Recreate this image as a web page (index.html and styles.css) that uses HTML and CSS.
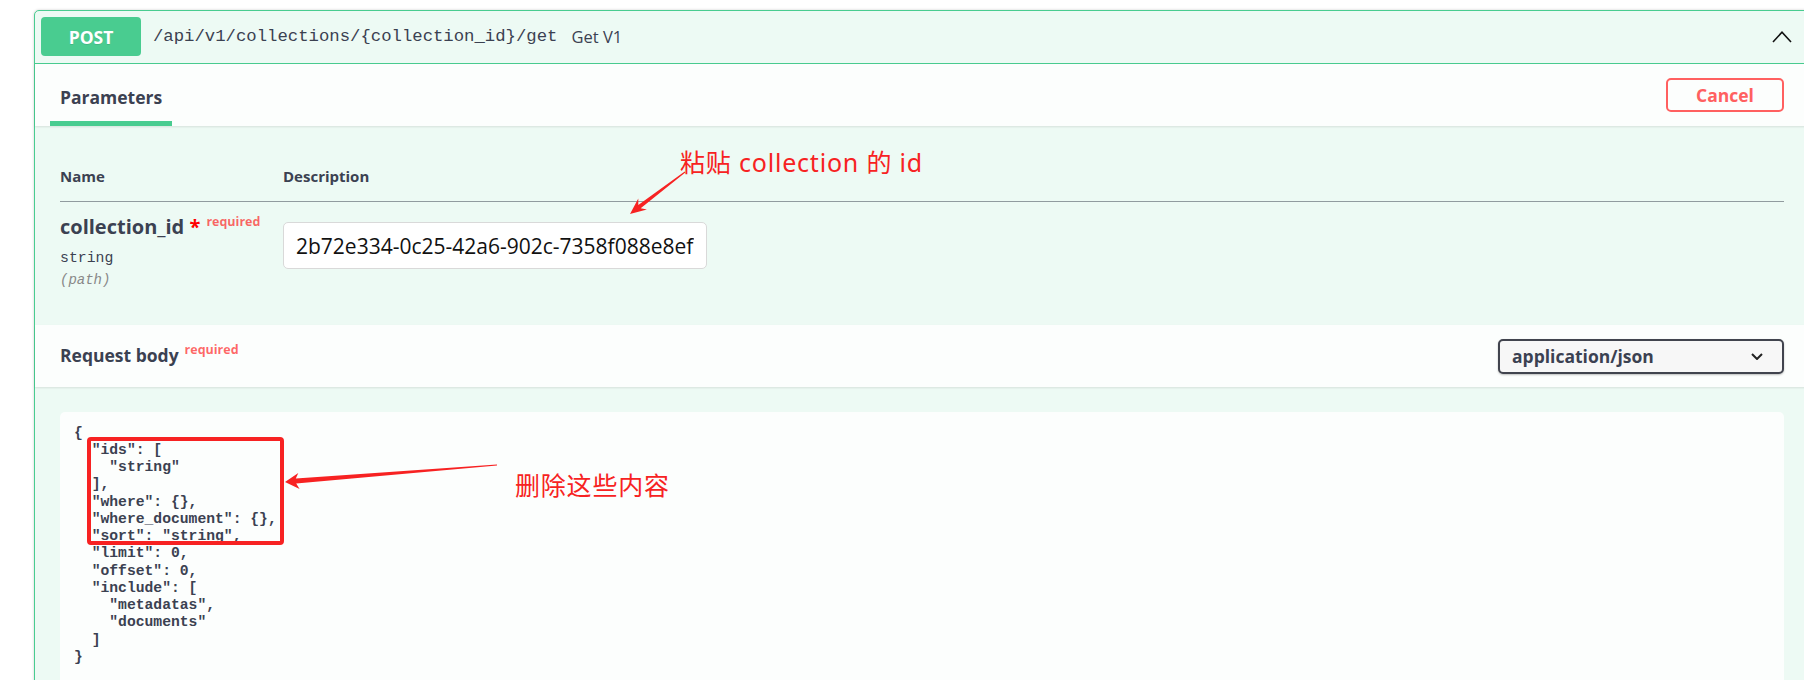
FILE: index.html
```html
<!DOCTYPE html>
<html lang="en">
<head>
  <meta charset="UTF-8" />
  <title>Get V1</title>
  <link rel="stylesheet" href="styles.css">
</head>
<body>
  <div class="opblock">
    <div class="summary">
      <span class="method">POST</span>
      <span class="path">/api/v1/collections/{collection_id}/get</span>
      <span class="summary-desc">Get V1</span>
      <svg class="toggle" width="20" height="12" viewBox="0 0 20 12"><polyline points="1,11 10,1.2 19,11" /></svg>
    </div>

    <div class="section-header">
      <div class="tab"><h4>Parameters</h4></div>
      <button class="cancel">Cancel</button>
    </div>

    <div class="params">
      <table>
        <thead>
          <tr><th class="col-name">Name</th><th>Description</th></tr>
        </thead>
        <tbody>
          <tr>
            <td class="col-name">
              <div class="param-name">collection_id<span class="star">&nbsp;*</span><span class="req">required</span></div>
              <div class="param-type">string</div>
              <div class="param-in">(path)</div>
            </td>
            <td>
              <input type="text" class="param-input" value="2b72e334-0c25-42a6-902c-7358f088e8ef" />
            </td>
          </tr>
        </tbody>
      </table>
      <svg class="arrow" width="700" height="120"><polygon points="595,88 603.3,72.6 603.3,79 649.7,45.6 650.3,46.4 605.7,82.2 611.9,83.6" /></svg>
      <div class="note note-paste">粘贴 collection 的 id</div>
    </div>

    <div class="section-header">
      <h4>Request body<span class="req">required</span></h4>
      <div class="select">
        <span>application/json</span>
        <svg width="12" height="7" viewBox="0 0 12 7"><polyline points="1,1 6,6 11,1" /></svg>
      </div>
    </div>

    <div class="body-area">
<pre class="code">{
  "ids": [
    "string"
  ],
  "where": {},
  "where_document": {},
  "sort": "string",
  "limit": 0,
  "offset": 0,
  "include": [
    "metadatas",
    "documents"
  ]
}</pre>
      <div class="mark-box"></div>
      <svg class="arrow" width="520" height="120"><polygon points="250,95 263.3,85.9 260.8,91.6 462,77.5 462,78.5 261.2,96.6 264.6,101.9" /></svg>
      <div class="note note-delete">删除这些内容</div>
    </div>
  </div>
</body>
</html>
```

FILE: styles.css
```css
:root {
  --green: #49cc90;
  --green-bg: #edfaf4;
  --text: #3b4151;
  --mark: #f72222;
  --cancel: #ff6060;
  --radius: 5px;
}
* {
  box-sizing: border-box;
}
html, body {
  overflow: hidden;
}
body {
  margin: 0;
  padding: 10px 0 0 34px;
  background: #fff;
  color: var(--text);
  font-family: "Open Sans", "Noto Sans", sans-serif;
}
.opblock {
  width: 1776px;
  border: 1px solid var(--green);
  border-radius: var(--radius);
  background: var(--green-bg);
  box-shadow: 0 0 3px rgba(0,0,0,0.19);
}
.summary {
  display: flex;
  align-items: center;
  padding: 6px 17px 7px 6px;
  border-bottom: 1px solid var(--green);
}
.method {
  display: flex;
  align-items: center;
  justify-content: center;
  width: 100px;
  height: 39px;
  background: var(--green);
  color: #fff;
  border-radius: 4px;
  font-size: 17.5px;
  font-weight: 700;
  text-shadow: 0 1px 0 rgba(0,0,0,0.1);
}
.path {
  padding: 0 12px;
  font-family: "Liberation Mono", monospace;
  font-size: 17.3px;
  color: var(--text);
}
.summary-desc {
  padding-left: 2px;
  font-size: 16.5px;
  color: var(--text);
}
.toggle {
  margin-left: auto;
  fill: none;
  stroke: #111;
  stroke-width: 1.6;
}
.section-header {
  display: flex;
  align-items: center;
  justify-content: space-between;
  height: 62px;
  padding: 0 25px;
  background: rgba(255,255,255,0.8);
  box-shadow: 0 1px 2px rgba(0,0,0,0.1);
}
.section-header h4 {
  margin: 0;
  font-size: 17.5px;
  font-weight: 700;
  line-height: 24px;
}
.tab {
  position: relative;
  align-self: stretch;
  display: flex;
  align-items: flex-end;
}
.tab h4 {
  margin-bottom: 17px;
}
.tab::after {
  content: "";
  position: absolute;
  left: -10%;
  bottom: 0;
  width: 120%;
  height: 5px;
  background: var(--green);
}
.cancel {
  width: 118px;
  height: 34px;
  border: 2px solid var(--cancel);
  border-radius: var(--radius);
  background: transparent;
  color: var(--cancel);
  font-family: "Open Sans", sans-serif;
  font-size: 17.5px;
  font-weight: 700;
}
.req {
  position: relative;
  top: -8px;
  padding-left: 6px;
  font-size: 12.5px;
  font-weight: 700;
  color: rgba(255,0,0,0.6);
}
.params {
  position: relative;
  height: 199px;
  padding: 25px 25px 0;
}
table {
  width: 100%;
  border-collapse: collapse;
}
th {
  padding: 15px 0;
  text-align: left;
  font-size: 15px;
  font-weight: 700;
  line-height: 20px;
  border-bottom: 1px solid rgba(59,65,81,0.3);
}
td {
  padding: 13px 0 0;
  vertical-align: top;
}
.col-name {
  width: 223px;
}
.param-name {
  font-size: 20px;
  font-weight: 700;
  line-height: 24px;
  white-space: nowrap;
}
.star {
  color: red;
}
.param-type {
  margin-top: 7px;
  font-family: "Liberation Mono", monospace;
  font-size: 14.8px;
  line-height: 18px;
}
.param-in {
  margin-top: 4px;
  font-family: "Liberation Mono", monospace;
  font-size: 14px;
  font-style: italic;
  line-height: 18px;
  color: #888;
}
.param-input {
  display: block;
  width: 424px;
  height: 47px;
  margin-top: 7px;
  padding: 0 12px;
  border: 1px solid #d9d9d9;
  border-radius: var(--radius);
  background: #fff;
  color: #111;
  font-family: "Open Sans", sans-serif;
  font-size: 21px;
}
.select {
  display: flex;
  align-items: center;
  justify-content: space-between;
  width: 286px;
  height: 35px;
  padding: 0 19px 0 12px;
  border: 2px solid #41444e;
  border-radius: var(--radius);
  background: #f7f7f7;
  box-shadow: 0 1px 2px rgba(0,0,0,0.25);
  font-size: 17.5px;
  font-weight: 700;
}
.select svg {
  fill: none;
  stroke: #222;
  stroke-width: 2;
}
.body-area {
  position: relative;
  padding: 25px;
}
.code {
  height: 320px;
  margin: 0;
  padding: 12.5px 14px;
  border-radius: var(--radius);
  background: rgba(255,255,255,0.8);
  color: var(--text);
  font-family: "Liberation Mono", monospace;
  font-size: 14.7px;
  font-weight: 600;
  line-height: 17.25px;
}
.arrow {
  position: absolute;
  left: 0;
  top: 0;
  fill: var(--mark);
}
.mark-box {
  position: absolute;
  left: 52px;
  top: 50px;
  width: 197px;
  height: 108px;
  border: 4px solid var(--mark);
  border-radius: 4px;
}
.note {
  position: absolute;
  color: var(--mark);
  font-family: "Noto Sans", "Noto Sans CJK SC", sans-serif;
  font-size: 25px;
  line-height: 30px;
  letter-spacing: 0.8px;
  white-space: nowrap;
}
.note-paste {
  left: 645px;
  top: 21px;
}
.note-delete {
  left: 480px;
  top: 83px;
}
```
